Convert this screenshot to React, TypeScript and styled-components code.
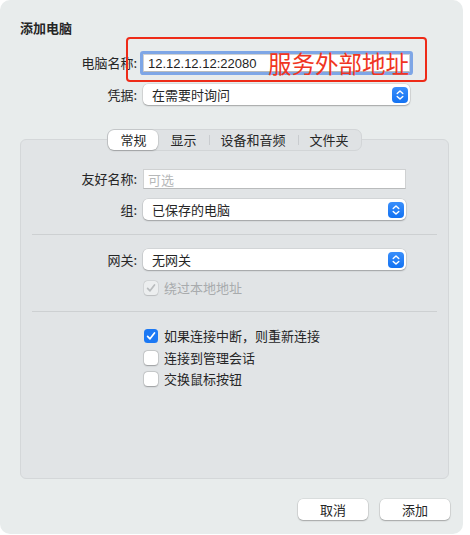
import React from 'react';
import styled, { createGlobalStyle } from 'styled-components';

const GlobalStyle = createGlobalStyle`
  body {
    margin: 0;
    background: #ffffff;
    font-family: "Noto Sans CJK SC", "Liberation Sans", sans-serif;
    font-size: 13px;
    color: #262626;
  }
`;

const Window = styled.div`
  width: 463px;
  height: 534px;
  box-sizing: border-box;
  padding-top: 20px;
  background: #e8ecec;
  border-radius: 10px;
  display: flex;
  flex-direction: column;
`;

const Title = styled.div`
  padding-left: 20px;
  font-weight: 700;
  line-height: 16px;
  height: 16px;
`;

const FormGrid = styled.div<{ $label: number; $control: number; $top?: number; $left?: number }>`
  display: grid;
  grid-template-columns: ${(p) => p.$label}px ${(p) => p.$control}px;
  column-gap: 6px;
  align-items: center;
  margin-top: ${(p) => p.$top ?? 0}px;
  margin-left: ${(p) => p.$left ?? 0}px;
`;

const Label = styled.div`
  text-align: right;
  line-height: 16px;
  white-space: nowrap;
`;

const NameField = styled.div`
  position: relative;
  height: 24px;
  padding: 3px 0;
  box-sizing: border-box;
`;

const TextInput = styled.div<{ $focused?: boolean; $placeholder?: boolean }>`
  height: ${(p) => (p.$focused ? 18 : 20)}px;
  box-sizing: border-box;
  background: #ffffff;
  border: 1px solid #cfd1d2;
  border-bottom-color: #b9bbbc;
  padding-left: 4px;
  display: flex;
  align-items: center;
  font-family: ${(p) => (p.$focused ? '"Liberation Sans", sans-serif' : 'inherit')};
  color: ${(p) => (p.$placeholder ? '#b6b8b9' : '#1e1e1e')};
  box-shadow: ${(p) => (p.$focused ? '0 0 0 3px #7ea6e6' : 'none')};
  border-radius: ${(p) => (p.$focused ? '1px' : '0')};
`;

const Annotation = styled.div`
  position: absolute;
  left: -17px;
  right: -17px;
  top: -14px;
  bottom: -7px;
  border: 2px solid #ee2b18;
  border-radius: 4px;
  pointer-events: none;
`;

const AnnotationText = styled.span`
  position: absolute;
  right: 1px;
  top: 50%;
  transform: translateY(-50%);
  font-size: 23.5px;
  line-height: 24px;
  color: #f03522;
  white-space: nowrap;
  font-family: "Noto Sans CJK SC", sans-serif;
`;

const Select = styled.div<{ $height?: number }>`
  height: ${(p) => p.$height ?? 21}px;
  box-sizing: border-box;
  background: #ffffff;
  border-radius: 5px;
  box-shadow: 0 0 0 0.5px rgba(0, 0, 0, 0.12), 0 1px 1.5px rgba(0, 0, 0, 0.25);
  display: flex;
  align-items: center;
  justify-content: space-between;
  padding: 0 2px 0 9px;
  line-height: 16px;
`;

const StepperIcon = () => (
  <svg width="16" height="16" viewBox="0 0 16 16">
    <defs>
      <linearGradient id="stepGrad" x1="0" y1="0" x2="0" y2="1">
        <stop offset="0" stopColor="#3a8ffb" />
        <stop offset="1" stopColor="#1372f2" />
      </linearGradient>
    </defs>
    <rect x="0" y="0" width="16" height="16" rx="4" fill="url(#stepGrad)" />
    <path d="M5.2 6.6 L8 3.9 L10.8 6.6" fill="none" stroke="#fff" strokeWidth="1.4" strokeLinecap="round" strokeLinejoin="round" />
    <path d="M5.2 9.4 L8 12.1 L10.8 9.4" fill="none" stroke="#fff" strokeWidth="1.4" strokeLinecap="round" strokeLinejoin="round" />
  </svg>
);

const TabArea = styled.div`
  margin: 24px 14px 0 20px;
  display: flex;
  flex-direction: column;
  align-items: center;
`;

const TabBar = styled.div`
  position: relative;
  z-index: 1;
  height: 22px;
  box-sizing: border-box;
  margin-bottom: -12px;
  display: flex;
  align-items: stretch;
  background: #dfe2e4;
  border: 1px solid #d2d5d7;
  border-radius: 7px;
`;

const Tab = styled.div<{ $active?: boolean; $divider?: boolean }>`
  position: relative;
  display: flex;
  align-items: center;
  padding: 0 12px;
  line-height: 16px;
  background: ${(p) => (p.$active ? '#ffffff' : 'transparent')};
  border-radius: 6px;
  box-shadow: ${(p) => (p.$active ? '0 0 0 0.5px rgba(0,0,0,0.12), 0 1px 1.5px rgba(0,0,0,0.2)' : 'none')};
  &::before {
    content: '';
    display: ${(p) => (p.$divider ? 'block' : 'none')};
    position: absolute;
    left: 0;
    top: 5px;
    bottom: 5px;
    width: 1px;
    background: #c9cccf;
  }
`;

const Panel = styled.div`
  align-self: stretch;
  height: 340px;
  box-sizing: border-box;
  padding-top: 29px;
  background: #e1e4e6;
  border: 1px solid #d4d7d9;
  border-radius: 6px;
  display: flex;
  flex-direction: column;
`;

const Divider = styled.div<{ $above: number; $below: number }>`
  height: 1px;
  background: #cdd0d2;
  margin: ${(p) => p.$above}px 11px ${(p) => p.$below}px 11px;
`;

const CheckRow = styled.label<{ $disabled?: boolean }>`
  display: flex;
  align-items: center;
  gap: 6px;
  height: 14px;
  line-height: 16px;
  color: ${(p) => (p.$disabled ? '#a8abad' : '#262626')};
  white-space: nowrap;
  margin-left: 1px;
`;

const Checks = styled.div`
  display: flex;
  flex-direction: column;
  gap: 7.5px;
`;

const Box = styled.span<{ $checked?: boolean; $disabled?: boolean }>`
  width: 14px;
  height: 14px;
  box-sizing: border-box;
  flex: none;
  border-radius: 3.5px;
  display: flex;
  align-items: center;
  justify-content: center;
  background: ${(p) => (p.$checked ? '#1b78f4' : p.$disabled ? '#eceeef' : '#ffffff')};
  box-shadow: ${(p) =>
    p.$checked
      ? 'none'
      : p.$disabled
      ? '0 0 0 0.5px rgba(0,0,0,0.1), 0 0.5px 1px rgba(0,0,0,0.12)'
      : '0 0 0 0.5px rgba(0,0,0,0.16), 0 0.5px 1.5px rgba(0,0,0,0.25)'};
`;

const Check = ({ color }: { color: string }) => (
  <svg width="10" height="10" viewBox="0 0 10 10">
    <path d="M1.6 5.3 L4 7.8 L8.5 2" fill="none" stroke={color} strokeWidth="1.7" strokeLinecap="round" strokeLinejoin="round" />
  </svg>
);

const Footer = styled.div`
  margin-top: 20px;
  padding-right: 13px;
  display: flex;
  justify-content: flex-end;
  gap: 12px;
`;

const Button = styled.button`
  width: 70px;
  height: 21px;
  border: none;
  border-radius: 5px;
  background: #ffffff;
  font: inherit;
  line-height: 16px;
  color: #262626;
  padding: 0;
  box-shadow: 0 0 0 0.5px rgba(0, 0, 0, 0.12), 0 1px 1.5px rgba(0, 0, 0, 0.25);
`;

const tabs = ['常规', '显示', '设备和音频', '文件夹'];

const App = () => {
  return (
    <>
      <GlobalStyle />
      <Window>
        <Title>添加电脑</Title>
        <FormGrid $label={117} $control={267} $top={15} $left={20}>
          <Label>电脑名称:</Label>
          <NameField>
            <Annotation />
            <TextInput $focused>
              12.12.12.12:22080
              <AnnotationText>服务外部地址</AnnotationText>
            </TextInput>
          </NameField>
        </FormGrid>
        <FormGrid $label={117} $control={267} $top={9} $left={20}>
          <Label>凭据:</Label>
          <Select>
            在需要时询问
            <StepperIcon />
          </Select>
        </FormGrid>

        <TabArea>
          <TabBar>
            {tabs.map((t, i) => (
              <Tab key={t} $active={i === 0} $divider={i > 1}>
                {t}
              </Tab>
            ))}
          </TabBar>
          <Panel>
            <FormGrid $label={116} $control={263}>
              <Label>友好名称:</Label>
              <TextInput $placeholder>可选</TextInput>
            </FormGrid>
            <FormGrid $label={116} $control={263} $top={10}>
              <Label>组:</Label>
              <Select>
                已保存的电脑
                <StepperIcon />
              </Select>
            </FormGrid>
            <Divider $above={14} $below={14} />
            <FormGrid $label={116} $control={263}>
              <Label>网关:</Label>
              <Select>
                无网关
                <StepperIcon />
              </Select>
            </FormGrid>
            <FormGrid $label={116} $control={263} $top={11}>
              <span />
              <CheckRow $disabled>
                <Box $checked={false} $disabled>
                  <Check color="#b9bcbe" />
                </Box>
                绕过本地地址
              </CheckRow>
            </FormGrid>
            <Divider $above={16} $below={17} />
            <FormGrid $label={116} $control={263}>
              <span />
              <Checks>
                <CheckRow>
                  <Box $checked>
                    <Check color="#ffffff" />
                  </Box>
                  如果连接中断，则重新连接
                </CheckRow>
                <CheckRow>
                  <Box />
                  连接到管理会话
                </CheckRow>
                <CheckRow>
                  <Box />
                  交换鼠标按钮
                </CheckRow>
              </Checks>
            </FormGrid>
          </Panel>
        </TabArea>

        <Footer>
          <Button>取消</Button>
          <Button>添加</Button>
        </Footer>
      </Window>
    </>
  );
};

export default App;
